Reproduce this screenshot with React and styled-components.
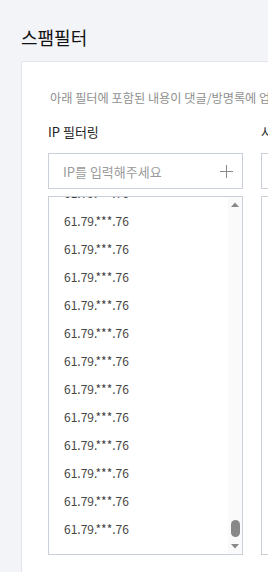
import React, { useEffect, useRef } from "react";
import styled, { createGlobalStyle } from "styled-components";

const GlobalStyle = createGlobalStyle`
  html, body {
    margin: 0;
    padding: 0;
    background: #f3f4f7;
    overflow: hidden;
  }
  body {
    font-family: "Noto Sans CJK KR", "Noto Sans", sans-serif;
  }
`;

const Page = styled.div`
  width: 268px;
  height: 572px;
  overflow: hidden;
  padding-left: 21px;
  box-sizing: border-box;
`;

const Title = styled.h2`
  margin: 0;
  padding-top: 24px;
  font-size: 18px;
  line-height: 26px;
  font-weight: 400;
  color: #111;
  white-space: nowrap;
`;

const Card = styled.section`
  margin-top: 11px;
  width: 720px;
  height: 600px;
  background: #fff;
  border: 1px solid #e2e5ec;
  padding: 26px 0 0 26px;
  box-sizing: border-box;
`;

const Desc = styled.p`
  margin: 0;
  font-size: 12.2px;
  line-height: 20px;
  color: #8f8f8f;
  white-space: nowrap;
  padding-left: 2px;
`;

const Columns = styled.div`
  display: flex;
  gap: 18px;
  margin-top: 14px;
`;

const Column = styled.div`
  width: 195px;
  flex: none;
`;

const Label = styled.div`
  font-size: 13px;
  line-height: 20px;
  color: #222;
  white-space: nowrap;
`;

const InputBox = styled.div`
  margin-top: 11px;
  height: 36px;
  border: 1px solid #c9d0da;
  box-sizing: border-box;
  display: flex;
  align-items: center;
  padding: 0 9px 0 14px;
`;

const Input = styled.input`
  flex: 1;
  min-width: 0;
  border: 0;
  outline: 0;
  font: inherit;
  font-size: 13px;
  color: #333;
  background: transparent;
  padding: 0;
  &::placeholder {
    color: #9a9a9a;
  }
`;

const AddButton = styled.button`
  border: 0;
  background: none;
  padding: 0;
  width: 13px;
  height: 13px;
  display: flex;
  cursor: pointer;
`;

const ListBox = styled.div`
  margin-top: 7px;
  height: 359px;
  box-sizing: border-box;
  border: 1px solid #c9d0da;
  display: flex;
`;

const Viewport = styled.ul`
  flex: 1;
  list-style: none;
  margin: 0;
  padding: 0 0 11px;
  overflow: hidden;
`;

const Row = styled.li`
  height: 28px;
  line-height: 28px;
  padding-left: 15px;
  font-size: 12px;
  color: #444;
`;

const ScrollBar = styled.div`
  width: 14px;
  flex: none;
  background: #fafafa;
  display: flex;
  flex-direction: column;
`;

const ArrowButton = styled.div`
  height: 15px;
  display: flex;
  align-items: center;
  justify-content: center;
`;

const Track = styled.div`
  flex: 1;
  display: flex;
  flex-direction: column;
  justify-content: flex-end;
  align-items: center;
  padding-bottom: 2px;
`;

const Thumb = styled.div`
  width: 9px;
  height: 17px;
  border-radius: 5px;
  background: #888;
`;

const PlusIcon = () => (
  <svg width="13" height="13" viewBox="0 0 13 13">
    <path d="M6.5 0v13M0 6.5h13" stroke="#8a8a8a" strokeWidth="1" fill="none" />
  </svg>
);

const Triangle = ({ down }) => (
  <svg width="8" height="5" viewBox="0 0 8 5">
    <path d={down ? "M0 0h8L4 4.5z" : "M0 5h8L4 0.5z"} fill="#888" />
  </svg>
);

const ips = Array.from({ length: 245 }, () => "61.79.***.76");

function FilterColumn({ label, placeholder, items }) {
  const listRef = useRef(null);
  useEffect(() => {
    const el = listRef.current;
    if (el) el.scrollTop = el.scrollHeight;
  }, []);
  return (
    <Column>
      <Label>{label}</Label>
      <InputBox>
        <Input placeholder={placeholder} />
        <AddButton aria-label="추가">
          <PlusIcon />
        </AddButton>
      </InputBox>
      <ListBox>
        <Viewport ref={listRef}>
          {items.map((ip, i) => (
            <Row key={i}>{ip}</Row>
          ))}
        </Viewport>
        <ScrollBar>
          <ArrowButton>
            <Triangle />
          </ArrowButton>
          <Track>
            <Thumb />
          </Track>
          <ArrowButton>
            <Triangle down />
          </ArrowButton>
        </ScrollBar>
      </ListBox>
    </Column>
  );
}

export default function App() {
  return (
    <>
      <GlobalStyle />
      <Page>
        <Title>스팸필터</Title>
        <Card>
          <Desc>
            아래 필터에 포함된 내용이 댓글/방명록에 업로드되면 스팸으로 처리됩니다.
          </Desc>
          <Columns>
            <FilterColumn label="IP 필터링" placeholder="IP를 입력해주세요" items={ips} />
            <FilterColumn label="사이트 필터링" placeholder="주소를 입력해주세요" items={[]} />
          </Columns>
        </Card>
      </Page>
    </>
  );
}
